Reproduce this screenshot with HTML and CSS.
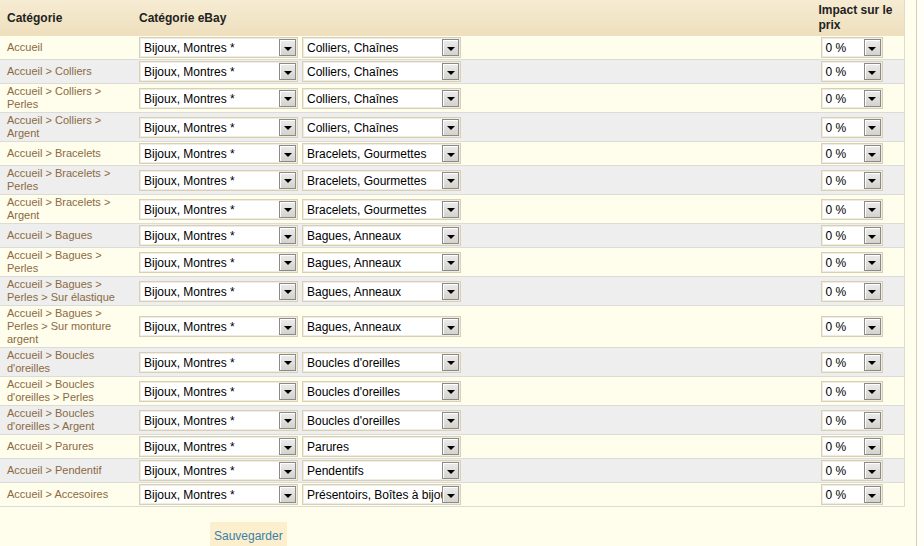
FILE: index.html
```html
<!DOCTYPE html>
<html lang="fr">
<head>
    <meta charset="UTF-8">
    <title>Catégories eBay</title>
    <link rel="stylesheet" href="styles.css">
</head>
<body>
    <div class="page">
        <table class="cat-table">
            <colgroup>
                <col class="col-cat">
                <col>
                <col class="col-impact">
            </colgroup>
            <thead>
                <tr>
                    <th class="th-cat">Catégorie</th>
                    <th>Catégorie eBay</th>
                    <th>Impact sur le prix</th>
                </tr>
            </thead>
            <tbody id="rows"></tbody>
        </table>

        <div class="actions">
            <button class="btn">Sauvegarder</button>
        </div>
    </div>

    <script>
        const rows = [
            ['Accueil', 'Colliers, Chaînes'],
            ['Accueil > Colliers', 'Colliers, Chaînes'],
            ['Accueil > Colliers > Perles', 'Colliers, Chaînes'],
            ['Accueil > Colliers > Argent', 'Colliers, Chaînes'],
            ['Accueil > Bracelets', 'Bracelets, Gourmettes'],
            ['Accueil > Bracelets > Perles', 'Bracelets, Gourmettes'],
            ['Accueil > Bracelets > Argent', 'Bracelets, Gourmettes'],
            ['Accueil > Bagues', 'Bagues, Anneaux'],
            ['Accueil > Bagues > Perles', 'Bagues, Anneaux'],
            ['Accueil > Bagues > Perles > Sur élastique', 'Bagues, Anneaux'],
            ['Accueil > Bagues > Perles > Sur monture argent', 'Bagues, Anneaux'],
            ['Accueil > Boucles d\'oreilles', 'Boucles d\'oreilles'],
            ['Accueil > Boucles d\'oreilles > Perles', 'Boucles d\'oreilles'],
            ['Accueil > Boucles d\'oreilles > Argent', 'Boucles d\'oreilles'],
            ['Accueil > Parures', 'Parures'],
            ['Accueil > Pendentif', 'Pendentifs'],
            ['Accueil > Accesoires', 'Présentoirs, Boîtes à bijoux']
        ];

        function dropdown(text, cls) {
            return `<span class="dd ${cls}"><span class="dd-text">${text}</span><span class="dd-btn"><span class="arrow"></span></span></span>`;
        }

        const tbody = document.getElementById('rows');
        rows.forEach(([cat, ebay], i) => {
            const tr = document.createElement('tr');
            tr.className = i % 2 ? 'alt' : '';
            tr.innerHTML = `
                <td class="td-cat"><a href="#">${cat}</a></td>
                <td class="td-ebay">${dropdown('Bijoux, Montres *', 'dd-wide')}${dropdown(ebay, 'dd-wide')}</td>
                <td class="td-impact">${dropdown('0 %', 'dd-small')}</td>
            `;
            tbody.appendChild(tr);
        });
    </script>
</body>
</html>
```

FILE: styles.css
```css
* {
    box-sizing: border-box;
}

html {
    background: #fffff6;
}

body {
    margin: 0;
    font-family: 'Liberation Sans', Arial, sans-serif;
    color: #222;
}

.page {
    width: 917px;
    min-height: 100vh;
    background: #fffdeb;
    border-right: 1px solid #cfcfc8;
}

.cat-table {
    width: 905px;
    table-layout: fixed;
    border-collapse: collapse;
    border-right: 1px solid #dedbd0;
    border-bottom: 1px solid #dcdad0;
}

.col-cat {
    width: 137px;
}

.col-impact {
    width: 88px;
}

.cat-table th {
    background: linear-gradient(#f6ecd3, #eedfbd);
    text-align: left;
    vertical-align: middle;
    font-size: 12px;
    font-weight: bold;
    line-height: 15px;
    height: 36px;
    padding: 3px 2px;
}

.cat-table th.th-cat {
    padding-left: 7px;
}

.cat-table td {
    padding: 1px 2px;
    border-bottom: 1px solid #dcdcd6;
    vertical-align: middle;
    font-size: 11px;
    line-height: 13px;
}

.cat-table tr.alt td {
    background: #eeeeee;
}

.td-cat {
    padding-left: 7px !important;
    padding-right: 14px !important;
}

.td-cat a {
    color: #8b6a42;
    text-decoration: none;
}

.td-ebay {
    white-space: nowrap;
}

/* fake select boxes */
.dd {
    display: inline-flex;
    align-items: center;
    height: 21px;
    background: #fff;
    border: 1px solid #d8cfb8;
    box-shadow: inset 0 0 0 1px #f1ece0;
    vertical-align: middle;
    font-size: 12px;
}

.dd-wide {
    width: 159px;
    margin-right: 4px;
}

.dd-small {
    width: 62px;
    margin-left: 2px;
}

.dd-text {
    flex: 1;
    overflow: hidden;
    white-space: nowrap;
    padding: 2px 0 0 4px;
    line-height: 17px;
    color: #000;
}

.dd-btn {
    width: 17px;
    height: 17px;
    margin-right: 1px;
    border: 1px solid #8a8a8a;
    background: linear-gradient(#ececec, #d4d2cc);
    box-shadow: inset 1px 1px 0 #fff;
    display: flex;
    align-items: center;
    justify-content: center;
}

.arrow {
    width: 0;
    height: 0;
    margin-top: 2px;
    border-left: 4px solid transparent;
    border-right: 4px solid transparent;
    border-top: 4px solid #000;
}

.actions {
    padding: 15px 0 0 210px;
}

.btn {
    background: #fcefcd;
    color: #3a7fab;
    border: none;
    font-family: 'Liberation Sans', Arial, sans-serif;
    font-size: 12px;
    padding: 7px 4px 8px;
    cursor: pointer;
}
```
